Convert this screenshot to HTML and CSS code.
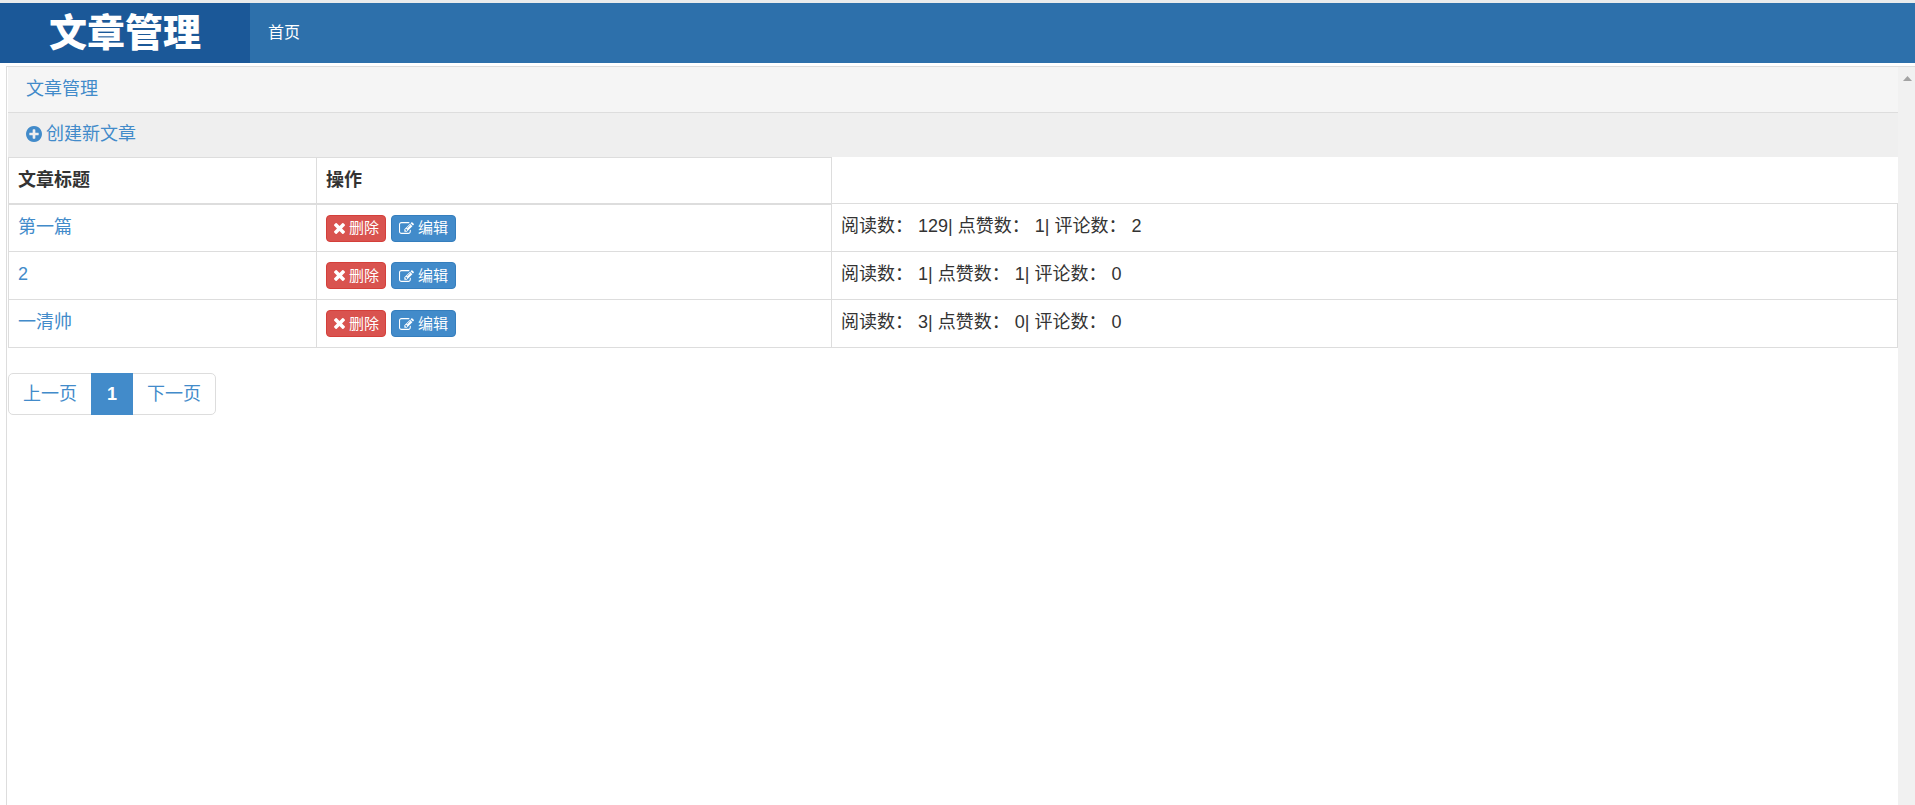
FILE: index.html
```
<!DOCTYPE html>
<html lang="zh-CN">
<head>
<meta charset="utf-8">
<title>文章管理</title>
<link rel="stylesheet" href="styles.css">
</head>
<body>
<svg class="sprite" aria-hidden="true">
  <symbol id="plus" viewBox="0 0 1536 1536"><path d="M1216 832v-128q0-26-19-45t-45-19h-256v-256q0-26-19-45t-45-19h-128q-26 0-45 19t-19 45v256h-256q-26 0-45 19t-19 45v128q0 26 19 45t45 19h256v256q0 26 19 45t45 19h128q26 0 45-19t19-45v-256h256q26 0 45-19t19-45zm320-64q0 209-103 385.5t-279.5 279.5-385.5 103-385.5-103-279.5-279.5-103-385.5 103-385.5 279.5-279.5 385.5-103 385.5 103 279.5 279.5 103 385.5z"/></symbol>
  <symbol id="times" viewBox="302 366 1188 1188"><path d="M1490 1322q0 40-28 68l-136 136q-28 28-68 28t-68-28l-294-294-294 294q-28 28-68 28t-68-28l-136-136q-28-28-28-68t28-68l294-294-294-294q-28-28-28-68t28-68l136-136q28-28 68-28t68 28l294 294 294-294q28-28 68-28t68 28l136 136q28 28 28 68t-28 68l-294 294 294 294q28 28 28 68z"/></symbol>
  <symbol id="edit" viewBox="0 128 1792 1408"><path d="M888 1184l116-116-152-152-116 116v56h96v96h56zm440-720q-16-16-33 1l-350 350q-17 17-1 33t33-1l350-350q17-17 1-33zm80 594v190q0 119-84.5 203.5t-203.5 84.5h-832q-119 0-203.5-84.5t-84.5-203.5v-832q0-119 84.5-203.5t203.5-84.5h832q63 0 117 25 15 7 18 23 3 17-9 29l-49 49q-14 14-32 8-23-6-45-6h-832q-66 0-113 47t-47 113v832q0 66 47 113t113 47h832q66 0 113-47t47-113v-126q0-13 9-22l64-64q15-15 35-7t20 29zm-96-738l288 288-672 672h-288v-288zm444 132l-92 92-288-288 92-92q28-28 68-28t68 28l152 152q28 28 28 68t-28 68z"/></symbol>
</svg>
<header class="navbar">
  <h1 class="brand">文章管理</h1>
  <nav class="nav"><a href="#">首页</a></nav>
</header>
<div class="frame">
  <main class="content">
    <div class="heading"><a href="#">文章管理</a></div>
    <div class="toolbar"><a class="create" href="#"><svg class="icon-plus" aria-hidden="true"><use href="#plus"/></svg>创建新文章</a></div>
    <table class="articles">
      <colgroup><col class="col-title"><col class="col-actions"><col></colgroup>
      <thead>
        <tr><th scope="col">文章标题</th><th scope="col">操作</th></tr>
      </thead>
      <tbody>
        <tr>
          <td><a href="#">第一篇</a></td>
          <td><div class="actions"><button type="button" class="btn danger"><svg class="icon-times" aria-hidden="true"><use href="#times"/></svg>删除</button><button type="button" class="btn primary"><svg class="icon-edit" aria-hidden="true"><use href="#edit"/></svg>编辑</button></div></td>
          <td>阅读数： 129| 点赞数： 1| 评论数： 2</td>
        </tr>
        <tr>
          <td><a href="#">2</a></td>
          <td><div class="actions"><button type="button" class="btn danger"><svg class="icon-times" aria-hidden="true"><use href="#times"/></svg>删除</button><button type="button" class="btn primary"><svg class="icon-edit" aria-hidden="true"><use href="#edit"/></svg>编辑</button></div></td>
          <td>阅读数： 1| 点赞数： 1| 评论数： 0</td>
        </tr>
        <tr>
          <td><a href="#">一清帅</a></td>
          <td><div class="actions"><button type="button" class="btn danger"><svg class="icon-times" aria-hidden="true"><use href="#times"/></svg>删除</button><button type="button" class="btn primary"><svg class="icon-edit" aria-hidden="true"><use href="#edit"/></svg>编辑</button></div></td>
          <td>阅读数： 3| 点赞数： 0| 评论数： 0</td>
        </tr>
      </tbody>
    </table>
    <nav class="pagination" aria-label="分页">
      <a href="#">上一页</a><a class="active" href="#" aria-current="page">1</a><a href="#">下一页</a>
    </nav>
  </main>
  <div class="scroll-track" aria-hidden="true"><svg class="arrow" viewBox="0 0 9 5"><path d="M0 5 4.5 0 9 5z"/></svg></div>
</div>
</body>
</html>
```
FILE: styles.css
```
* { box-sizing: border-box; }
body {
  margin: 0;
  min-height: 100vh;
  display: flex;
  flex-direction: column;
  border-top: 3px solid #e9ebec;
  background: #fff;
  color: #333;
  font: 18px/26px "Liberation Sans", "Noto Sans CJK SC", sans-serif;
}
a { color: #428bca; text-decoration: none; }
svg { fill: currentColor; flex: none; }
.sprite { display: none; }

.navbar { display: flex; height: 60px; background: #2d70ab; }
.brand {
  width: 250px;
  margin: 0;
  background: #1b5898;
  color: #fff;
  font-size: 38px;
  font-weight: 900;
  line-height: 60px;
  text-align: center;
}
.nav a {
  display: block;
  padding: 0 18px;
  color: #fff;
  font-size: 16px;
  line-height: 60px;
}

.frame {
  flex: 1;
  display: flex;
  margin: 3px 0 0 6px;
  border: solid #ddd;
  border-width: 1px 0 0 1px;
}
.content { flex: 1; padding-left: 1px; }
.heading {
  padding: 9px 18px 10px;
  border-bottom: 1px solid #ddd;
  background: #f5f5f5;
}
.toolbar { display: flex; padding: 8px 18px 10px; background: #efefef; }
.create { display: flex; align-items: center; gap: 4px; }
.icon-plus { width: 16px; height: 16px; }

.articles {
  width: 100%;
  table-layout: fixed;
  border-collapse: collapse;
}
.col-title { width: 308px; }
.col-actions { width: 515px; }
.articles th, .articles td {
  height: 48px;
  padding: 9px 9px;
  border: 1px solid #ddd;
  text-align: left;
  vertical-align: top;
}
.articles th { height: 46px; border-bottom-width: 2px; }
.actions { display: flex; gap: 5px; padding-top: 1px; }
.btn {
  display: inline-flex;
  align-items: center;
  gap: 4px;
  height: 27px;
  padding: 0 6px 0 7px;
  border: 1px solid;
  border-radius: 4px;
  color: #fff;
  font: 15px/18px "Liberation Sans", "Noto Sans CJK SC", sans-serif;
}
.danger { background: #d9534f; border-color: #d43f3a; }
.primary { padding: 0 7px; background: #428bca; border-color: #357ebd; }
.icon-times { width: 11px; height: 11px; }
.icon-edit { width: 15px; height: 12px; }

.pagination {
  display: inline-flex;
  margin-top: 25px;
  border: 1px solid #ddd;
  border-radius: 5px;
}
.pagination a { padding: 7px 14px; }
.pagination .active {
  margin: -1px 0;
  padding: 8px 16px;
  background: #428bca;
  color: #fff;
  font-weight: bold;
}

.scroll-track {
  width: 17px;
  padding: 9px 3px 0 5px;
  background: #f1f1f1;
  color: #a3a3a3;
}
.arrow { display: block; width: 9px; height: 5px; }
```
